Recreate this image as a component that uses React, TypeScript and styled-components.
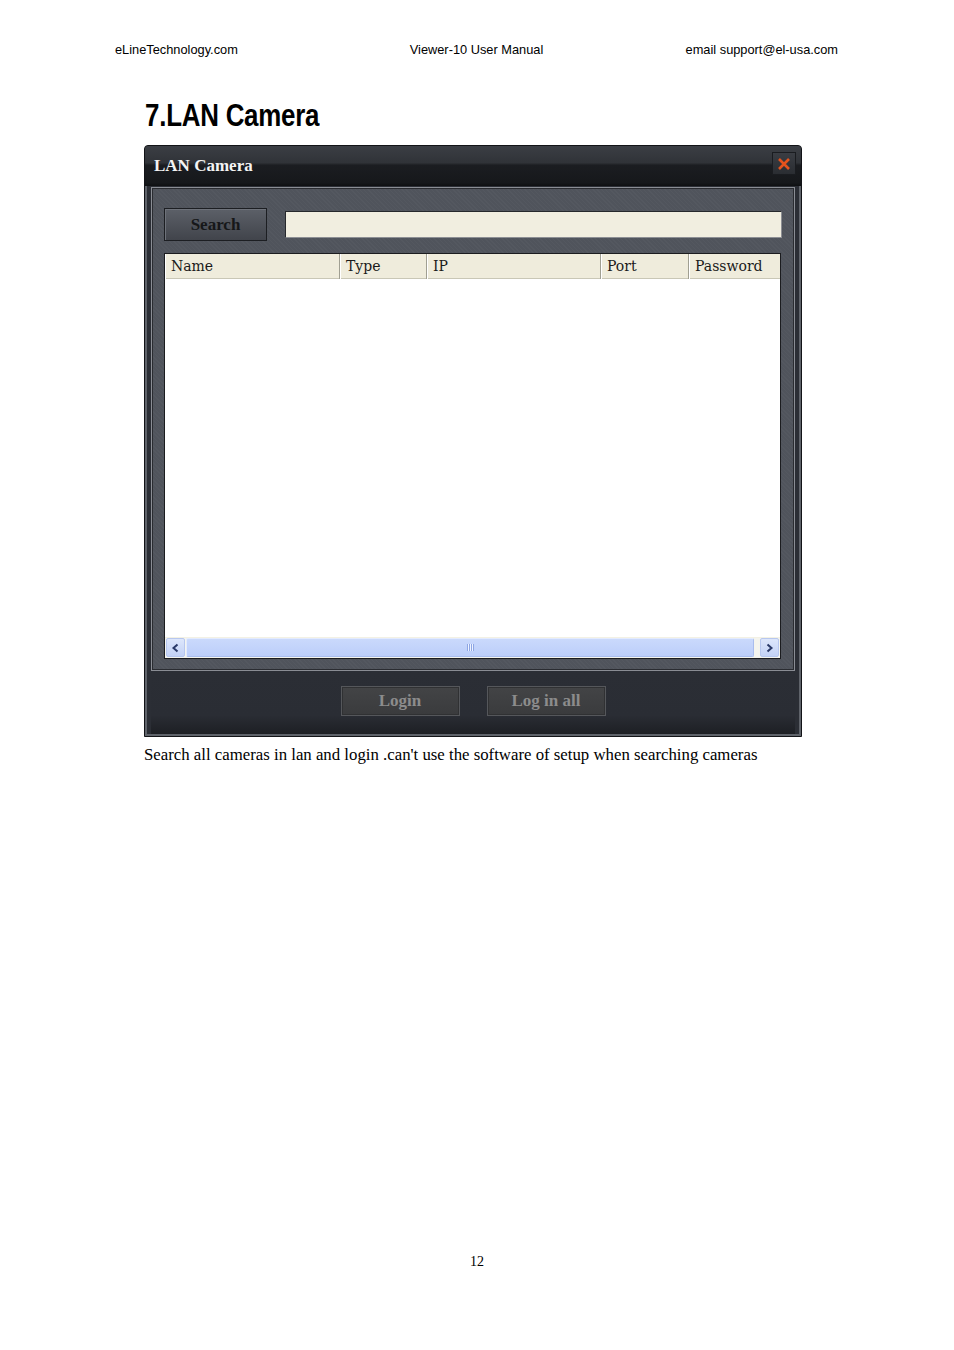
import styled, { createGlobalStyle } from "styled-components";

const GlobalStyle = createGlobalStyle`
  html, body {
    margin: 0;
    padding: 0;
    background: #ffffff;
  }
`;

const Page = styled.div`
  width: 954px;
  min-height: 1350px;
  display: flex;
  flex-direction: column;
  box-sizing: border-box;
  background: #ffffff;
  color: #000000;
`;

const RunningHeader = styled.header`
  display: grid;
  grid-template-columns: 1fr auto 1fr;
  padding: 42px 116px 0 115px;
  font-family: "Liberation Sans", Arial, sans-serif;
  font-size: 12.8px;
  line-height: 15px;
  span:last-child {
    text-align: right;
  }
`;

const Content = styled.main`
  margin-left: 144px;
  width: 658px;
  display: flex;
  flex-direction: column;
`;

/* the manual uses Arial Narrow Bold; squeeze Liberation Sans Bold to its width */
const Heading = styled.h1`
  margin: 40px 0 12px 1px;
  font-family: "Liberation Sans", Arial, sans-serif;
  font-weight: bold;
  font-size: 32px;
  line-height: 36px;
  letter-spacing: -0.3px;
  white-space: nowrap;
  transform: scaleX(0.81);
  transform-origin: left center;
`;

const Window = styled.div`
  width: 658px;
  height: 592px;
  box-sizing: border-box;
  border: 1px solid #121317;
  border-radius: 4px 4px 0 0;
  background: #1d1f23;
  display: flex;
  flex-direction: column;
`;

const TitleBar = styled.div`
  height: 40px;
  flex: none;
  display: flex;
  justify-content: space-between;
  align-items: flex-start;
  padding: 0 5px 0 9px;
  border-radius: 3px 3px 0 0;
  background: linear-gradient(
    #3b3e44 0%,
    #303338 42%,
    #1b1d21 48%,
    #16181b 92%,
    #0e0f11 100%
  );
`;

const TitleText = styled.span`
  font-family: "Liberation Serif", "Times New Roman", serif;
  font-weight: bold;
  font-size: 17px;
  line-height: 20px;
  margin-top: 10px;
  color: #f4f4f4;
`;

const CloseButton = styled.button`
  margin-top: 6px;
  width: 24px;
  height: 23px;
  padding: 0;
  border: 1px solid #1a1c20;
  background: linear-gradient(#3a3d43, #2a2d32);
  display: flex;
  align-items: center;
  justify-content: center;
  cursor: pointer;
`;

const Body = styled.div`
  flex: 1;
  display: flex;
  flex-direction: column;
  border: 2px solid #5f636a;
  border-top: none;
  padding: 1px 4px 0 4px;
  background: #2b2e35;
`;

const Panel = styled.section`
  height: 484px;
  box-sizing: border-box;
  border: 1px solid #8a8d94;
  box-shadow: inset 0 0 0 1px #2a2c31;
  padding: 20px 12px 0 12px;
  display: flex;
  flex-direction: column;
  gap: 12px;
  background-color: #50545c;
  background-image: repeating-linear-gradient(
    45deg,
    rgba(255, 255, 255, 0.025) 0 1px,
    transparent 1px 3px
  );
`;

const SearchRow = styled.div`
  display: flex;
  align-items: center;
  gap: 18px;
  height: 33px;
`;

const SearchButton = styled.button`
  width: 103px;
  height: 33px;
  flex: none;
  border: 1px solid #1c1e22;
  box-shadow: inset 1px 1px 0 #6e727a;
  background: linear-gradient(#5c6068, #41444b);
  font-family: "Liberation Serif", "Times New Roman", serif;
  font-weight: bold;
  font-size: 17px;
  color: #161719;
  padding: 0;
  cursor: pointer;
`;

const SearchInput = styled.input`
  flex: 1;
  height: 27px;
  box-sizing: border-box;
  border: 1px solid #26282c;
  border-right-color: #8d8f94;
  border-bottom-color: #8d8f94;
  background: #f1eee0;
  outline: none;
`;

const Table = styled.div`
  width: 617px;
  height: 406px;
  box-sizing: border-box;
  border: 1px solid #1b1c1f;
  background: #ffffff;
  display: flex;
  flex-direction: column;
`;

const HeaderRow = styled.div`
  display: grid;
  grid-template-columns: 175px 87px 174px 88px 1fr;
  height: 24px;
  flex: none;
  background: #efecdc;
  border-bottom: 1px solid #c9c7b6;
`;

const HeaderCell = styled.div`
  font-family: "DejaVu Serif", "Liberation Serif", serif;
  font-size: 14px;
  line-height: 25px;
  color: #1a1a1a;
  padding-left: 6px;
  border-right: 1px solid #a09f92;
  box-shadow: inset 1px 0 0 #ffffff;
  &:last-child {
    border-right: none;
  }
`;

const TableBody = styled.div`
  flex: 1;
  background: #ffffff;
  border-bottom: 1px solid #f3f1e4;
`;

const ScrollBar = styled.div`
  height: 19px;
  flex: none;
  display: flex;
  align-items: stretch;
  padding: 0 1px 1px 1px;
  background: #f4f4ee;
`;

const ScrollArrow = styled.div`
  width: 19px;
  flex: none;
  box-sizing: border-box;
  border: 1px solid #b7c7ef;
  border-radius: 2px;
  background: linear-gradient(#dde6fb, #c3d2f6);
  display: flex;
  align-items: center;
  justify-content: center;
`;

const ScrollThumb = styled.div<{ $gap: number }>`
  flex: 1;
  margin: 0 ${({ $gap }) => $gap}px 0 1px;
  box-sizing: border-box;
  border: 1px solid #e3ebfe;
  border-bottom-color: #a9bdee;
  border-right-color: #a9bdee;
  border-radius: 2px;
  background: linear-gradient(#cad9fc, #bccefa);
  display: flex;
  align-items: center;
  justify-content: center;
`;

const Grip = styled.span`
  width: 7px;
  height: 7px;
  background: repeating-linear-gradient(
    90deg,
    #8ea6e4 0 1px,
    #eef3ff 1px 2px
  );
`;

const Footer = styled.div`
  flex: 1;
  display: flex;
  justify-content: center;
  align-items: flex-start;
  gap: 27px;
  padding-top: 15px;
  background: linear-gradient(#2b2e35 0%, #2a2d34 70%, #1d1f24 100%);
`;

const FooterButton = styled.button<{ $width: number }>`
  width: ${({ $width }) => $width}px;
  height: 30px;
  box-sizing: border-box;
  border: 1px solid #55575b;
  box-shadow: inset 0 0 0 1px #303133;
  background: linear-gradient(#434446, #3a3b3d);
  font-family: "Liberation Serif", "Times New Roman", serif;
  font-weight: bold;
  font-size: 17px;
  color: #8c8c8c;
  padding: 0;
  cursor: default;
`;

const Caption = styled.p`
  margin: 8px 0 0 0;
  font-family: "Liberation Serif", "Times New Roman", serif;
  font-size: 16.8px;
  line-height: 20px;
  white-space: nowrap;
`;

const PageNumber = styled.footer`
  margin-top: auto;
  padding-bottom: 80px;
  text-align: center;
  font-family: "Liberation Serif", "Times New Roman", serif;
  font-size: 14px;
  line-height: 16px;
`;

const columns = ["Name", "Type", "IP", "Port", "Password"];

function Chevron({ dir }: { dir: "left" | "right" }) {
  const d = dir === "left" ? "M6.5 1.5 L2.5 5 L6.5 8.5" : "M2.5 1.5 L6.5 5 L2.5 8.5";
  return (
    <svg width="9" height="10" viewBox="0 0 9 10">
      <path d={d} fill="none" stroke="#2b3a68" strokeWidth="2" />
    </svg>
  );
}

export default function App() {
  return (
    <Page>
      <GlobalStyle />
      <RunningHeader>
        <span>eLineTechnology.com</span>
        <span>Viewer-10 User Manual</span>
        <span>email support@el-usa.com</span>
      </RunningHeader>
      <Content>
        <Heading>7.LAN Camera</Heading>
        <Window>
          <TitleBar>
            <TitleText>LAN Camera</TitleText>
            <CloseButton aria-label="Close">
              <svg width="14" height="14" viewBox="0 0 14 14">
                <path d="M2 2 L12 12 M12 2 L2 12" stroke="#e4531d" strokeWidth="2.6" />
              </svg>
            </CloseButton>
          </TitleBar>
          <Body>
            <Panel>
              <SearchRow>
                <SearchButton>Search</SearchButton>
                <SearchInput readOnly />
              </SearchRow>
              <Table>
                <HeaderRow>
                  {columns.map((c) => (
                    <HeaderCell key={c}>{c}</HeaderCell>
                  ))}
                </HeaderRow>
                <TableBody />
                <ScrollBar>
                  <ScrollArrow>
                    <Chevron dir="left" />
                  </ScrollArrow>
                  <ScrollThumb $gap={6}>
                    <Grip />
                  </ScrollThumb>
                  <ScrollArrow>
                    <Chevron dir="right" />
                  </ScrollArrow>
                </ScrollBar>
              </Table>
            </Panel>
            <Footer>
              <FooterButton $width={119}>Login</FooterButton>
              <FooterButton $width={119}>Log in all</FooterButton>
            </Footer>
          </Body>
        </Window>
        <Caption>
          Search all cameras in lan and login .can't use the software of setup when searching cameras
        </Caption>
      </Content>
      <PageNumber>12</PageNumber>
    </Page>
  );
}
